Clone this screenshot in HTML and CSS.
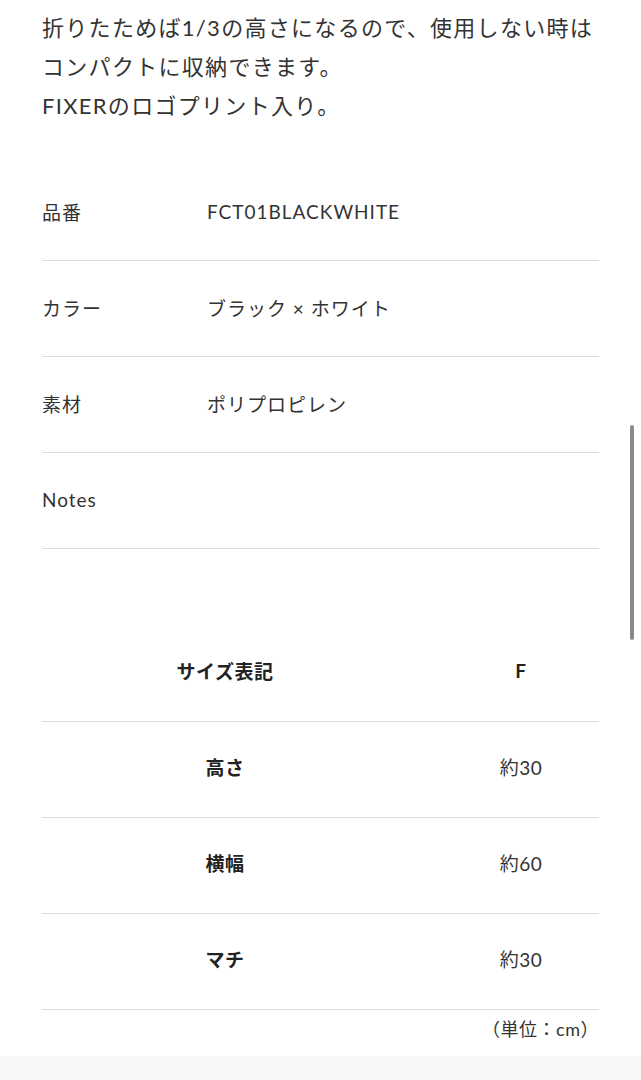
FILE: index.html
```html
<!DOCTYPE html>
<html lang="ja">
<head>
    <meta charset="UTF-8">
    <meta name="viewport" content="width=device-width, initial-scale=1.0">
    <title>FIXER 商品詳細</title>
    <link rel="stylesheet" href="styles.css">
</head>
<body>
    <div class="product-detail">
        <p class="description">
            折りたためば1/3の高さになるので、使用しない時は<br>
            コンパクトに収納できます。<br>
            FIXERのロゴプリント入り。
        </p>

        <dl class="spec-list">
            <div class="spec-row">
                <dt>品番</dt>
                <dd>FCT01BLACKWHITE</dd>
            </div>
            <div class="spec-row">
                <dt>カラー</dt>
                <dd>ブラック × ホワイト</dd>
            </div>
            <div class="spec-row">
                <dt>素材</dt>
                <dd>ポリプロピレン</dd>
            </div>
            <div class="spec-row">
                <dt>Notes</dt>
                <dd></dd>
            </div>
        </dl>

        <div class="size-table">
            <div class="size-row size-head">
                <div class="size-label">サイズ表記</div>
                <div class="size-value">F</div>
            </div>
            <div class="size-row">
                <div class="size-label">高さ</div>
                <div class="size-value">約30</div>
            </div>
            <div class="size-row">
                <div class="size-label">横幅</div>
                <div class="size-value">約60</div>
            </div>
            <div class="size-row">
                <div class="size-label">マチ</div>
                <div class="size-value">約30</div>
            </div>
        </div>
        <p class="unit-note">（単位：cm）</p>
    </div>

    <div class="next-section"></div>

    <div class="scroll-indicator"></div>
</body>
</html>
```

FILE: styles.css
```css
body {
    margin: 0;
    background: #fff;
    color: #333;
    font-family: Lato, 'Noto Sans CJK JP', sans-serif;
}

.product-detail {
    padding: 8px 42px 0 42px;
}

.description {
    margin: 0 0 40px 0;
    font-size: 22px;
    line-height: 39px;
    letter-spacing: 1.3px;
    color: #333;
}

.spec-list {
    margin: 0;
}

.spec-row {
    display: flex;
    align-items: center;
    height: 92px;
    padding-bottom: 3px;
    border-bottom: 1px solid #dcdcdc;
    font-size: 19px;
    letter-spacing: 1px;
}

.spec-row dt {
    width: 165px;
}

.spec-row dd {
    margin: 0;
}

.size-table {
    margin-top: 77px;
}

.size-row {
    display: grid;
    grid-template-columns: 401px 1fr;
    align-items: center;
    height: 89px;
    padding-bottom: 6px;
    border-bottom: 1px solid #dcdcdc;
    font-size: 19px;
    letter-spacing: 0.5px;
}

.size-label {
    padding-right: 35px;
    text-align: center;
    font-weight: bold;
    color: #222;
}

.size-value {
    text-align: center;
}

.size-head .size-value {
    font-weight: bold;
    color: #222;
}

.unit-note {
    margin: 4px 0 12px 0;
    text-align: right;
    font-size: 18px;
    line-height: 30px;
    letter-spacing: 0.5px;
}

.next-section {
    height: 40px;
    background: #f7f7f7;
}

.scroll-indicator {
    position: fixed;
    top: 425px;
    right: 7px;
    width: 4px;
    height: 215px;
    border-radius: 2px;
    background: #8a8a8a;
}
```
